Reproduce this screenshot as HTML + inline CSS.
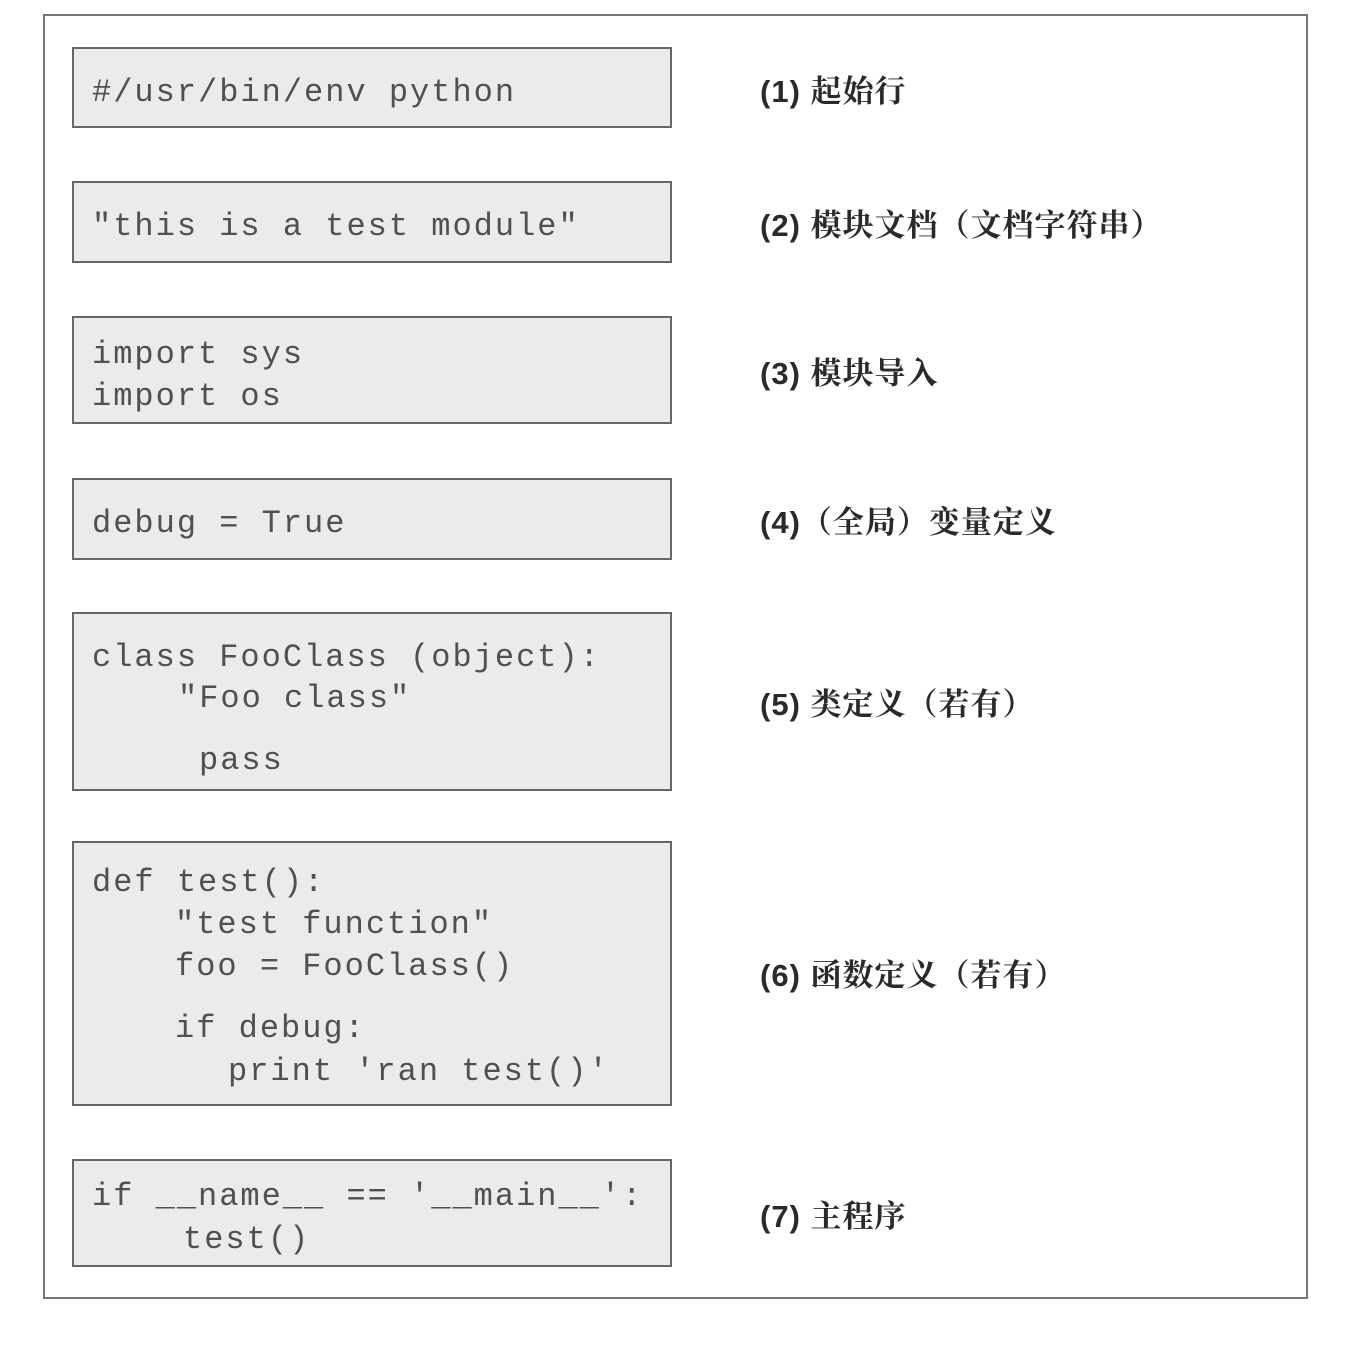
<!DOCTYPE html>
<html><head><meta charset="utf-8"><style>
body{margin:0;width:1370px;height:1346px;background:#fff;position:relative;overflow:hidden}
.outer{position:absolute;left:43px;top:14px;width:1265px;height:1285px;border:2px solid #777;box-sizing:border-box}
.box{position:absolute;left:72px;width:600px;background:#ebebeb;border:2px solid #666;box-sizing:border-box}
.l{position:absolute;height:40px;line-height:40px;font-family:"Liberation Mono",monospace;font-size:32px;letter-spacing:2px;color:#505050;white-space:pre;margin-top:3px}
.t{position:absolute;left:760px;height:40px;line-height:40px;font-family:"Liberation Sans","Noto Serif CJK SC","Noto Sans CJK SC",sans-serif;font-size:31px;letter-spacing:1px;color:#2a2a2a;white-space:pre;margin-top:2px;font-weight:bold}
</style></head><body>
<div class="outer"></div>
<div class="box" style="top:47px;height:81px"></div>
<div class="box" style="top:181px;height:82px"></div>
<div class="box" style="top:316px;height:108px"></div>
<div class="box" style="top:478px;height:82px"></div>
<div class="box" style="top:612px;height:179px"></div>
<div class="box" style="top:841px;height:265px"></div>
<div class="box" style="top:1159px;height:108px"></div>

<div class="l" style="left:92px;top:70px">#/usr/bin/env python</div>
<div class="l" style="left:92px;top:204px">"this is a test module"</div>
<div class="l" style="left:92px;top:332px">import sys</div>
<div class="l" style="left:92px;top:374px">import os</div>
<div class="l" style="left:92px;top:501px">debug = True</div>
<div class="l" style="left:92px;top:635px">class FooClass (object):</div>
<div class="l" style="left:178px;top:676px">"Foo class"</div>
<div class="l" style="left:199px;top:738px">pass</div>
<div class="l" style="left:92px;top:860px">def test():</div>
<div class="l" style="left:175px;top:902px">"test function"</div>
<div class="l" style="left:175px;top:944px">foo = FooClass()</div>
<div class="l" style="left:175px;top:1006px">if debug:</div>
<div class="l" style="left:228px;top:1049px">print 'ran test()'</div>
<div class="l" style="left:92px;top:1174px">if __name__ == '__main__':</div>
<div class="l" style="left:183px;top:1217px">test()</div>

<div class="t" style="top:70px">(1) 起始行</div>
<div class="t" style="top:204px">(2) 模块文档（文档字符串）</div>
<div class="t" style="top:352px">(3) 模块导入</div>
<div class="t" style="top:501px">(4)（全局）变量定义</div>
<div class="t" style="top:683px">(5) 类定义（若有）</div>
<div class="t" style="top:954px">(6) 函数定义（若有）</div>
<div class="t" style="top:1195px">(7) 主程序</div>
</body></html>
